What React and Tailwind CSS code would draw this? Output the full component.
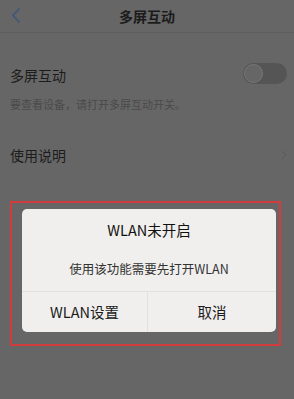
export default function App() {
  const font = { fontFamily: '"Noto Sans CJK SC", "Noto Sans", sans-serif' };
  return (
    <div className="w-[294px] h-[399px] bg-[#666666] flex flex-col overflow-hidden" style={font}>
      <div className="h-[33px] shrink-0 flex items-center relative border-b border-[#5e5e5e]">
        <svg className="absolute left-[11px] top-[7px]" width="11" height="17" viewBox="0 0 11 17">
          <path d="M8.5 1.5 L2 8.5 L8.5 15.5" fill="none" stroke="#40577a" strokeWidth="1.8" />
        </svg>
        <div className="flex-1 text-center text-[14px] font-bold text-[#1c1c1c] leading-none">多屏互动</div>
      </div>
      <div className="px-[10px] pt-[30px] flex items-center justify-between">
        <span className="text-[14px] text-[#1c1c1c] leading-none mt-[2px]">多屏互动</span>
        <div className="w-[44px] h-[21px] rounded-full bg-[#555555] mr-[-3px] flex items-center">
          <div className="w-[19px] h-[19px] rounded-full bg-[#666666] border border-[#777777] ml-[1px]" />
        </div>
      </div>
      <div className="px-[10px] pt-[15px] text-[11px] text-[#4a4a4a] leading-none">要查看设备，请打开多屏互动开关。</div>
      <div className="px-[10px] pt-[38px] flex items-center justify-between">
        <span className="text-[14px] text-[#1c1c1c] leading-none">使用说明</span>
        <svg width="6" height="10" viewBox="0 0 6 10" className="mr-[-3px]">
          <path d="M1 1 L5 5 L1 9" fill="none" stroke="#5a5a5a" strokeWidth="1" />
        </svg>
      </div>
      <div className="mt-[39px] ml-[10px] w-[271px] h-[145px] shrink-0 border-2 border-[#d23c3c] px-[10px] pt-[6px]">
        <div className="w-[254px] h-[123px] bg-[#f0efed] rounded-[5px] flex flex-col">
          <div className="text-center text-[14.5px] text-[#111111] pt-[14px] leading-none">WLAN未开启</div>
          <div className="text-center text-[12.5px] text-[#333333] pt-[25px] leading-none">使用该功能需要先打开WLAN</div>
          <div className="mt-[16px] border-t border-[#e2e1df] flex flex-1">
            <div className="w-[126px] flex items-center justify-center text-[14.5px] text-[#1a1a1a] border-r border-[#e2e1df]">WLAN设置</div>
            <div className="flex-1 flex items-center justify-center text-[14.5px] text-[#1a1a1a]">取消</div>
          </div>
        </div>
      </div>
    </div>
  );
}
